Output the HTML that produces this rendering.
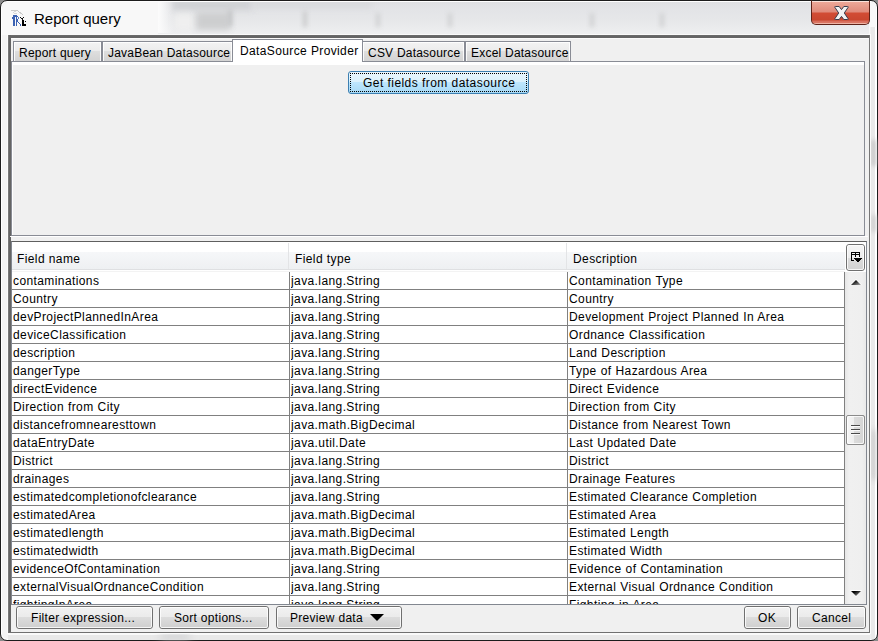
<!DOCTYPE html>
<html><head><meta charset="utf-8">
<style>
*{box-sizing:border-box;margin:0;padding:0}
html,body{width:878px;height:641px;overflow:hidden;background:#8c8c8c;position:relative}
.a{position:absolute}
.t{position:absolute;font-family:"Liberation Sans",sans-serif;font-size:12px;letter-spacing:0.3px;color:#000;white-space:nowrap;line-height:17px;height:17px}
#win{left:0;top:0;width:878px;height:641px;border:1px solid #1c1c1c;border-radius:7px;background:#f3f3f3;box-shadow:inset 0 0 0 1px #fff;overflow:hidden}
#client{left:8px;top:35px;width:862px;height:598px;background:#f0f0f0;border-right:1px solid #777;border-bottom:1px solid #707070;box-shadow:0 0 0 1px #fafafa}
.strip-top{left:8px;top:35px;width:861px;height:3px;background:linear-gradient(#707070,#646464 40%,#666 100%)}
.strip-left{left:8px;top:35px;width:3px;height:597px;background:linear-gradient(90deg,#787878 0,#787878 1px,#646464 1px)}
.tab{position:absolute;top:41px;height:20px;border:1px solid #898c95;border-bottom:none;background:linear-gradient(#f3f3f3 0,#ececec 45%,#dedede 50%,#d3d3d3 100%)}
.tab:before{content:"";position:absolute;left:0;top:0;right:0;bottom:0;border:1px solid rgba(255,255,255,.85);border-bottom:none}
.tabsel{position:absolute;top:39px;height:23px;border:1px solid #898c95;border-bottom:none;background:#fff}
.btn{position:absolute;border:1px solid #707070;border-radius:3px;background:linear-gradient(#f2f2f2 0,#ebebeb 10px,#dddddd 10px,#cfcfcf 100%)}
.btn:before{content:"";position:absolute;left:0;top:0;right:0;bottom:0;border:1px solid rgba(255,255,255,.8);border-radius:2px}
.row{position:absolute;left:12px;width:832px;height:18px;border-bottom:1px solid #808080;background:#fff}
.c1,.c2,.c3{position:absolute;top:1px;height:17px;line-height:17px;font-family:"Liberation Sans",sans-serif;font-size:12px;letter-spacing:0.4px;word-spacing:0.3px;white-space:nowrap;overflow:hidden}
.c1{left:1px;width:276px}
.c2{left:279px;width:276px}
.c3{left:557px;width:276px}
</style></head><body>
<div id="win" class="a">
<div class="a" style="left:1px;top:1px;width:874px;height:33px;background:#f8f8f8;border-radius:7px 7px 0 0"></div>
<div class="a" style="left:869px;top:26px;width:6px;height:612px;background:linear-gradient(90deg,#f4f4f4 0,#e9e9e9 1px,#e9e9e9 5px,#fff 5px)"></div>
<div class="a" style="left:7px;top:633px;width:862px;height:6px;background:linear-gradient(#fafafa 0,#fafafa 1px,#e9e9e9 1px,#e9e9e9 6px)"></div>
</div>
<!-- title blur -->
<div class="a" style="left:158px;top:2px;width:711px;height:32px;overflow:hidden">
  <div class="a" style="left:0;top:0;width:711px;height:32px;background:linear-gradient(#dfe0e3 0,#e3e4e7 25%,#e6e7e9 55%,#eeeff0 100%)"></div>
  <div class="a" style="left:14px;top:-2px;width:80px;height:10px;background:#cfd1d4;filter:blur(3px)"></div>
  <div class="a" style="left:16px;top:12px;width:20px;height:16px;background:#efefef;filter:blur(3px)"></div>
  <div class="a" style="left:38px;top:10px;width:34px;height:18px;background:#cdcecf;filter:blur(3px)"></div>
  <div class="a" style="left:94px;top:-2px;width:120px;height:8px;background:#d8dadd;filter:blur(3px)"></div>
  <div class="a" style="left:70px;top:8px;width:4px;height:16px;background:#c2c3c5;filter:blur(2px)"></div>
  <div class="a" style="left:145px;top:9px;width:4px;height:16px;background:#cbcccd;filter:blur(2px)"></div>
  <div class="a" style="left:218px;top:11px;width:4px;height:14px;background:#d0d1d3;filter:blur(2px)"></div>
  <div class="a" style="left:290px;top:11px;width:4px;height:14px;background:#d0d1d3;filter:blur(2px)"></div>
  <div class="a" style="left:432px;top:11px;width:4px;height:14px;background:#d0d1d3;filter:blur(2px)"></div>
  <div class="a" style="left:502px;top:11px;width:4px;height:14px;background:#d0d1d3;filter:blur(2px)"></div>
  <div class="a" style="left:0;top:0;width:16px;height:31px;background:linear-gradient(90deg,#fcfcfc,rgba(252,252,252,0))"></div>
</div>
<!-- right frame streaks -->
<div class="a" style="left:160px;top:634px;width:30px;height:5px;background:#c9cacc;filter:blur(4px)"></div>
<div class="a" style="left:871px;top:140px;width:5px;height:26px;background:#c8c8c8;filter:blur(2px)"></div>
<div class="a" style="left:871px;top:215px;width:5px;height:17px;background:#cfcfcf;filter:blur(2px)"></div>
<div class="a" style="left:871px;top:430px;width:5px;height:50px;background:#c8c8c8;filter:blur(3px)"></div>
<!-- icon -->
<svg class="a" style="left:8px;top:6px" width="22" height="22" viewBox="0 0 22 22" shape-rendering="crispEdges">
  <path d="M3 4.5 H9 L15 8.5" stroke="#bdbdbd" stroke-width="1" fill="none" opacity=".8"/>
  <path d="M5 6.5 L8 5 M10 5.5 L13 7.5 M6 8 L9 7" stroke="#c8c8c8" stroke-width="1" fill="none" opacity=".7"/>
  <rect x="5" y="9" width="2" height="11" fill="#3b62b3"/>
  <rect x="4" y="11" width="1" height="2" fill="#3b62b3"/>
  <rect x="7" y="9" width="2" height="2" fill="#3b62b3"/>
  <rect x="8" y="10" width="1" height="10" fill="#3b62b3"/>
  <rect x="9" y="10" width="1" height="1" fill="#3b62b3"/>
  <rect x="10" y="11" width="1" height="2" fill="#5a7fc6"/>
  <rect x="9" y="13" width="1" height="1" fill="#3b62b3"/>
  <rect x="9" y="14" width="1" height="2" fill="#3b62b3"/>
  <rect x="10" y="16" width="1" height="1" fill="#3b62b3"/>
  <rect x="11" y="17" width="1" height="1" fill="#3b62b3"/>
  <rect x="12" y="18" width="1" height="2" fill="#3b62b3"/>
  <rect x="12" y="11" width="1" height="1" fill="#111"/>
  <rect x="13" y="12" width="2" height="1" fill="#111"/>
  <rect x="15" y="11" width="1" height="1" fill="#111"/>
  <rect x="14" y="13" width="1" height="1" fill="#111"/>
  <rect x="14" y="14" width="2" height="6" fill="#000"/>
  <rect x="14" y="18" width="4" height="2" fill="#000"/>
  <rect x="17" y="15" width="1" height="1" fill="#000"/>
</svg>
<div class="a" style="left:34px;top:9px;font-family:'Liberation Sans',sans-serif;font-size:15px;line-height:20px;color:#000;white-space:nowrap">Report query</div>
<!-- close -->
<div class="a" style="left:811px;top:0;width:59px;height:25px;border:1px solid #5e2218;border-top:1px solid #1c1c1c;border-radius:0 0 5px 5px;background:linear-gradient(#fbe2da 0,#fbe2da 1px,#eda898 1px,#e08a7a 11px,#d24c34 12px,#c9462f 19px,#d66a58 20px,#dc7866 22px,#efb3a4 22px);overflow:hidden">
  <svg class="a" style="left:22px;top:5px" width="16" height="15" viewBox="0 0 16 15">
    <path d="M0.8 1.2 Q0.5 0.5 1.5 0.5 L5.2 0.5 L7.5 3.6 L9.8 0.5 L13.5 0.5 Q14.5 0.5 14.2 1.2 L10.3 7 L14.2 12.8 Q14.5 13.5 13.5 13.5 L9.8 13.5 L7.5 10.4 L5.2 13.5 L1.5 13.5 Q0.5 13.5 0.8 12.8 L4.7 7 Z" fill="#f2f2f2" stroke="#363c4c" stroke-width="1"/>
  </svg>
</div>

<div id="client" class="a"></div>
<div class="a strip-top"></div>
<div class="a strip-left"></div>
<div class="a" style="left:11px;top:38px;width:858px;height:1px;background:#fafafa"></div>

<!-- tabbed panel -->
<div class="a" style="left:11px;top:61px;width:854px;height:175px;border:1px solid #898c95;background:#f0f0f0"></div>
<div class="a" style="left:12px;top:62px;width:852px;height:3px;background:#fff"></div>
<div class="a" style="left:12px;top:62px;width:1px;height:173px;background:#fff"></div>

<div class="tab" style="left:13px;width:89px"></div>
<div class="tab" style="left:102px;width:131px"></div>
<div class="tab" style="left:362px;width:103px"></div>
<div class="tab" style="left:465px;width:106px"></div>
<div class="tabsel" style="left:232px;width:131px"></div>
<div class="t" style="left:19px;top:45px;letter-spacing:0.22px">Report query</div>
<div class="t" style="left:108px;top:45px;letter-spacing:0.22px">JavaBean Datasource</div>
<div class="t" style="left:240px;top:43px;letter-spacing:0.38px">DataSource Provider</div>
<div class="t" style="left:368px;top:45px;letter-spacing:0.22px">CSV Datasource</div>
<div class="t" style="left:471px;top:45px;letter-spacing:0.22px">Excel Datasource</div>

<!-- get fields button -->
<div class="a" style="left:348px;top:71px;width:181px;height:23px;border:1px solid #3c7fb1;border-radius:3px;background:linear-gradient(#eaf6fd 0,#d9f0fc 50%,#bee6fd 50%,#a7d9f5 100%)"></div>
<div class="a" style="left:350px;top:73px;width:177px;height:19px;border:1px dotted #000"></div>
<div class="t" style="left:363px;top:75px;letter-spacing:0.45px">Get fields from datasource</div>

<!-- divider -->
<div class="a" style="left:10px;top:236px;width:858px;height:1px;background:#fff"></div>

<!-- scroll pane -->
<div class="a" style="left:11px;top:241px;width:856px;height:364px;border:1px solid #828790;border-top-color:#5f5f5f;background:#fff"></div>
<!-- header -->
<div class="a" style="left:12px;top:242px;width:833px;height:30px;background:linear-gradient(#fff 0,#fff 10px,#f6f7f9 10px,#eef0f2 27px,#dfe0e2 27px,#dfe0e2 28px,#fff 28px,#fff 29px,#f3f3f3 29px)"></div>
<div class="a" style="left:288px;top:243px;width:1px;height:26px;background:#e3e4e6"></div>
<div class="a" style="left:566px;top:243px;width:1px;height:26px;background:#e3e4e6"></div>
<div class="t" style="left:17px;top:251px;letter-spacing:0.4px">Field name</div>
<div class="t" style="left:295px;top:251px;letter-spacing:0.4px">Field type</div>
<div class="t" style="left:573px;top:251px;letter-spacing:0.4px">Description</div>
<!-- column control -->
<div class="btn" style="left:846px;top:244px;width:19px;height:27px;background:linear-gradient(#f6f6f6 0,#ededed 50%,#dcdcdc 50%,#d2d2d2 100%)"></div>
<svg class="a" style="left:848px;top:249px" width="16" height="16" viewBox="0 0 16 16" shape-rendering="crispEdges">
  <g fill="#000">
  <rect x="3" y="3" width="1" height="9"/><rect x="3" y="3" width="9" height="1"/><rect x="3" y="5" width="9" height="1"/>
  <rect x="7" y="3" width="1" height="5"/><rect x="11" y="3" width="1" height="5"/><rect x="3" y="11" width="3" height="1"/>
  <rect x="6" y="9" width="8" height="1"/><rect x="7" y="10" width="6" height="1"/><rect x="8" y="11" width="4" height="1"/><rect x="9" y="12" width="2" height="1"/>
  </g>
</svg>

<!-- rows -->
<div id="rows" class="a" style="left:0;top:0;width:878px;height:604px;overflow:hidden">
<div class="row" style="top:272px"><div class="c1">contaminations</div><div class="c2">java.lang.String</div><div class="c3">Contamination Type</div></div>
<div class="row" style="top:290px"><div class="c1">Country</div><div class="c2">java.lang.String</div><div class="c3">Country</div></div>
<div class="row" style="top:308px"><div class="c1">devProjectPlannedInArea</div><div class="c2">java.lang.String</div><div class="c3">Development Project Planned In Area</div></div>
<div class="row" style="top:326px"><div class="c1">deviceClassification</div><div class="c2">java.lang.String</div><div class="c3">Ordnance Classification</div></div>
<div class="row" style="top:344px"><div class="c1">description</div><div class="c2">java.lang.String</div><div class="c3">Land Description</div></div>
<div class="row" style="top:362px"><div class="c1">dangerType</div><div class="c2">java.lang.String</div><div class="c3">Type of Hazardous Area</div></div>
<div class="row" style="top:380px"><div class="c1">directEvidence</div><div class="c2">java.lang.String</div><div class="c3">Direct Evidence</div></div>
<div class="row" style="top:398px"><div class="c1">Direction from City</div><div class="c2">java.lang.String</div><div class="c3">Direction from City</div></div>
<div class="row" style="top:416px"><div class="c1">distancefromnearesttown</div><div class="c2">java.math.BigDecimal</div><div class="c3">Distance from Nearest Town</div></div>
<div class="row" style="top:434px"><div class="c1">dataEntryDate</div><div class="c2">java.util.Date</div><div class="c3">Last Updated Date</div></div>
<div class="row" style="top:452px"><div class="c1">District</div><div class="c2">java.lang.String</div><div class="c3">District</div></div>
<div class="row" style="top:470px"><div class="c1">drainages</div><div class="c2">java.lang.String</div><div class="c3">Drainage Features</div></div>
<div class="row" style="top:488px"><div class="c1">estimatedcompletionofclearance</div><div class="c2">java.lang.String</div><div class="c3">Estimated Clearance Completion</div></div>
<div class="row" style="top:506px"><div class="c1">estimatedArea</div><div class="c2">java.math.BigDecimal</div><div class="c3">Estimated Area</div></div>
<div class="row" style="top:524px"><div class="c1">estimatedlength</div><div class="c2">java.math.BigDecimal</div><div class="c3">Estimated Length</div></div>
<div class="row" style="top:542px"><div class="c1">estimatedwidth</div><div class="c2">java.math.BigDecimal</div><div class="c3">Estimated Width</div></div>
<div class="row" style="top:560px"><div class="c1">evidenceOfContamination</div><div class="c2">java.lang.String</div><div class="c3">Evidence of Contamination</div></div>
<div class="row" style="top:578px"><div class="c1">externalVisualOrdnanceCondition</div><div class="c2">java.lang.String</div><div class="c3">External Visual Ordnance Condition</div></div>
<div class="row" style="top:596px"><div class="c1">fightingInArea</div><div class="c2">java.lang.String</div><div class="c3">Fighting in Area</div></div>
</div>

<div class="a" style="left:289px;top:272px;width:1px;height:332px;background:#808080"></div>
<div class="a" style="left:567px;top:272px;width:1px;height:332px;background:#808080"></div>
<div class="a" style="left:844px;top:272px;width:1px;height:332px;background:#808080"></div>
<!-- scrollbar -->
<div class="a" style="left:845px;top:272px;width:21px;height:332px;background:linear-gradient(90deg,#e6e6e6 0,#f0f0f0 20%,#efefef 80%,#e9e9e9 100%)"></div>
<svg class="a" style="left:846px;top:274px" width="20" height="16" viewBox="0 0 20 16"><defs><linearGradient id="ga" x1="0" y1="0" x2="1" y2="1"><stop offset="0.25" stop-color="#000"/><stop offset="1" stop-color="#a8a8a8"/></linearGradient></defs><path d="M4 11 L10 5 L16 11 Z" fill="#fff" opacity=".9"/><path d="M5 11 L10 6 L15 11 Z" fill="url(#ga)"/></svg>
<svg class="a" style="left:846px;top:585px" width="20" height="16" viewBox="0 0 20 16"><path d="M4 5 L16 5 L10 12 Z" fill="#fff" opacity=".9"/><path d="M5 6 L15 6 L10 11 Z" fill="url(#ga)"/></svg>
<div class="btn" style="left:846px;top:415px;width:19px;height:30px;border-color:#8b8b8b;border-radius:2px;background:linear-gradient(90deg,#f6f6f6 0,#eeeeee 42%,#dcdcdc 42%,#d4d4d4 100%)"></div>
<div class="a" style="left:851px;top:425px;width:9px;height:1px;background:#4a4a4a"></div>
<div class="a" style="left:851px;top:426px;width:9px;height:1px;background:#fafafa"></div>
<div class="a" style="left:851px;top:429px;width:9px;height:1px;background:#4a4a4a"></div>
<div class="a" style="left:851px;top:430px;width:9px;height:1px;background:#fafafa"></div>
<div class="a" style="left:851px;top:433px;width:9px;height:1px;background:#4a4a4a"></div>
<div class="a" style="left:851px;top:434px;width:9px;height:1px;background:#fafafa"></div>

<!-- bottom buttons -->
<div class="btn" style="left:16px;top:606px;width:137px;height:23px"></div>
<div class="t" style="left:31px;top:610px">Filter expression...</div>
<div class="btn" style="left:159px;top:606px;width:110px;height:23px"></div>
<div class="t" style="left:174px;top:610px">Sort options...</div>
<div class="btn" style="left:276px;top:606px;width:126px;height:23px"></div>
<div class="t" style="left:290px;top:610px">Preview data</div>
<svg class="a" style="left:369px;top:613px" width="16" height="9" viewBox="0 0 16 9"><path d="M1 1 H15 L8 8 Z" fill="#000"/></svg>
<div class="btn" style="left:744px;top:606px;width:47px;height:23px"></div>
<div class="t" style="left:758px;top:610px">OK</div>
<div class="btn" style="left:797px;top:606px;width:69px;height:23px"></div>
<div class="t" style="left:812px;top:610px">Cancel</div>
</body></html>
